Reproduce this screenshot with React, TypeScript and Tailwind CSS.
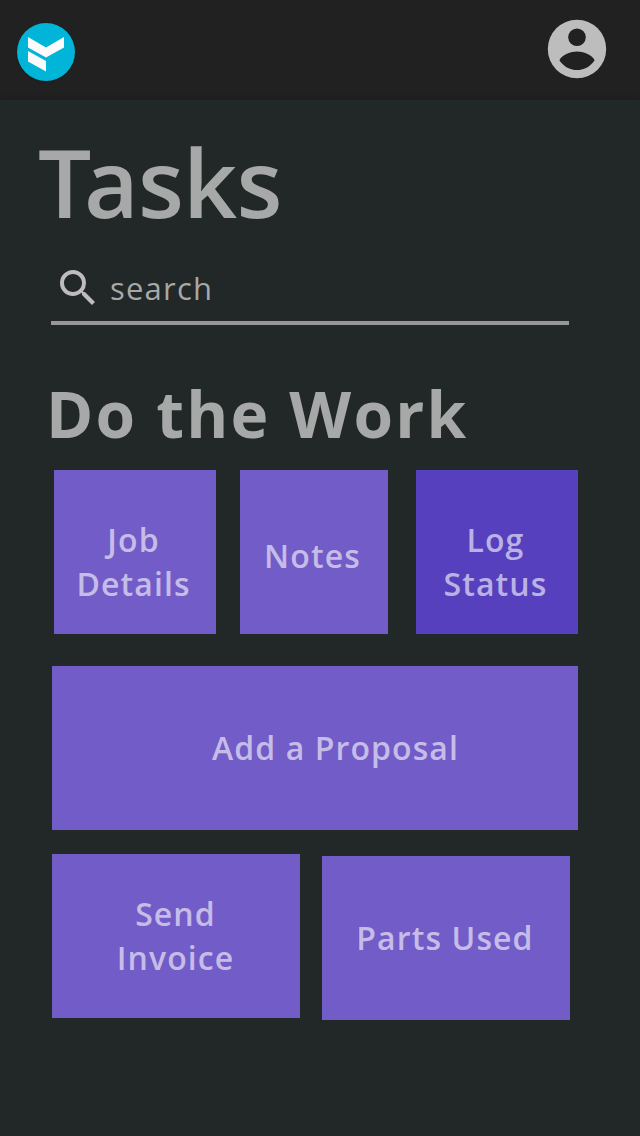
import type { ReactNode } from 'react';
import { MdSearch } from 'react-icons/md';

function Tile({ className, children }: { className: string; children: ReactNode }) {
  return (
    <button className={`flex shrink-0 items-center justify-center text-center text-[32px] leading-[44px] font-semibold tracking-[1.1px] text-white/60 ${className}`}>
      {children}
    </button>
  );
}

export default function App() {
  return (
    <div className="flex h-[1136px] w-[640px] flex-col overflow-hidden bg-[#222727] font-['Open_Sans',sans-serif]">
      <header className="flex h-[100px] shrink-0 items-start justify-between bg-[#212121] pl-[17px] pr-[33px]">
        <svg className="mt-[23px] size-[58px] drop-shadow-[0_1px_1px_rgba(0,0,0,0.2)]" viewBox="0 0 58 58">
          <circle cx="29" cy="29" r="29" fill="#00b5d8" />
          <path d="M11 14L29 24.500L47 14V24.500L29 34.500L11 24.500Z" fill="#fafafa" />
          <path d="M11 28L29 38V48.500L11 38.500Z" fill="#fafafa" />
        </svg>
        <svg className="mt-[19px] size-[60px]" viewBox="0 0 60 60">
          <circle cx="30" cy="30" r="29.200" fill="#bdbdbd" />
          <circle cx="30" cy="18.200" r="8.800" fill="#212121" />
          <path d="M12.400 41.200C15 36 24 32.600 30 32.600S45 36 47.600 41.200C43.700 47.200 37.400 51 30 51S16.300 47.200 12.400 41.200Z" fill="#212121" />
        </svg>
      </header>
      <main className="flex grow flex-col bg-[#222727] shadow-[0_0_8px_rgba(0,0,0,0.25)]">
        <h1 className="ml-[38px] mt-[17px] h-[131px] text-[94.500px] leading-[130px] font-semibold tracking-[-0.8px] text-[#a7a8a8]">
          <span className="tracking-[-7.500px]">T</span>asks
        </h1>
        <label className="ml-[51px] mt-[13px] flex h-[64px] w-[518px] items-start border-b-4 border-[#979797] pl-[3px]">
          <MdSearch className="mt-[3px] size-12 text-[#bdbdbd]" />
          <span className="ml-2 mt-[5px] text-[31px] leading-[44px] tracking-[1.200px] text-[#a7a8a8]">search</span>
        </label>
        <h2 className="ml-[46px] mt-[45px] h-[88px] text-[64px] leading-[88px] font-bold tracking-[2.200px] text-[#a7a8a8]">Do the Work</h2>
        <div className="ml-[54px] mt-3 flex">
          <Tile className="h-[164px] w-[162px] bg-[#725cc7] pt-5 pr-[3px]">Job<br />Details</Tile>
          <Tile className="ml-6 h-[164px] w-[148px] bg-[#725cc7] pt-2 pr-[3px]">Notes</Tile>
          <Tile className="ml-7 h-[164px] w-[162px] bg-[#5640bd] pt-5 pr-[3px]">Log<br />Status</Tile>
        </div>
        <Tile className="ml-[52px] mt-8 h-[164px] w-[526px] bg-[#725cc7] pl-[41px]">Add a Proposal</Tile>
        <div className="ml-[52px] mt-6 flex">
          <Tile className="h-[164px] w-[248px] bg-[#725cc7] pr-px">Send<br />Invoice</Tile>
          <Tile className="ml-[22px] mt-[2px] h-[164px] w-[248px] bg-[#725cc7] pr-[2px]">Parts Used</Tile>
        </div>
      </main>
    </div>
  );
}
